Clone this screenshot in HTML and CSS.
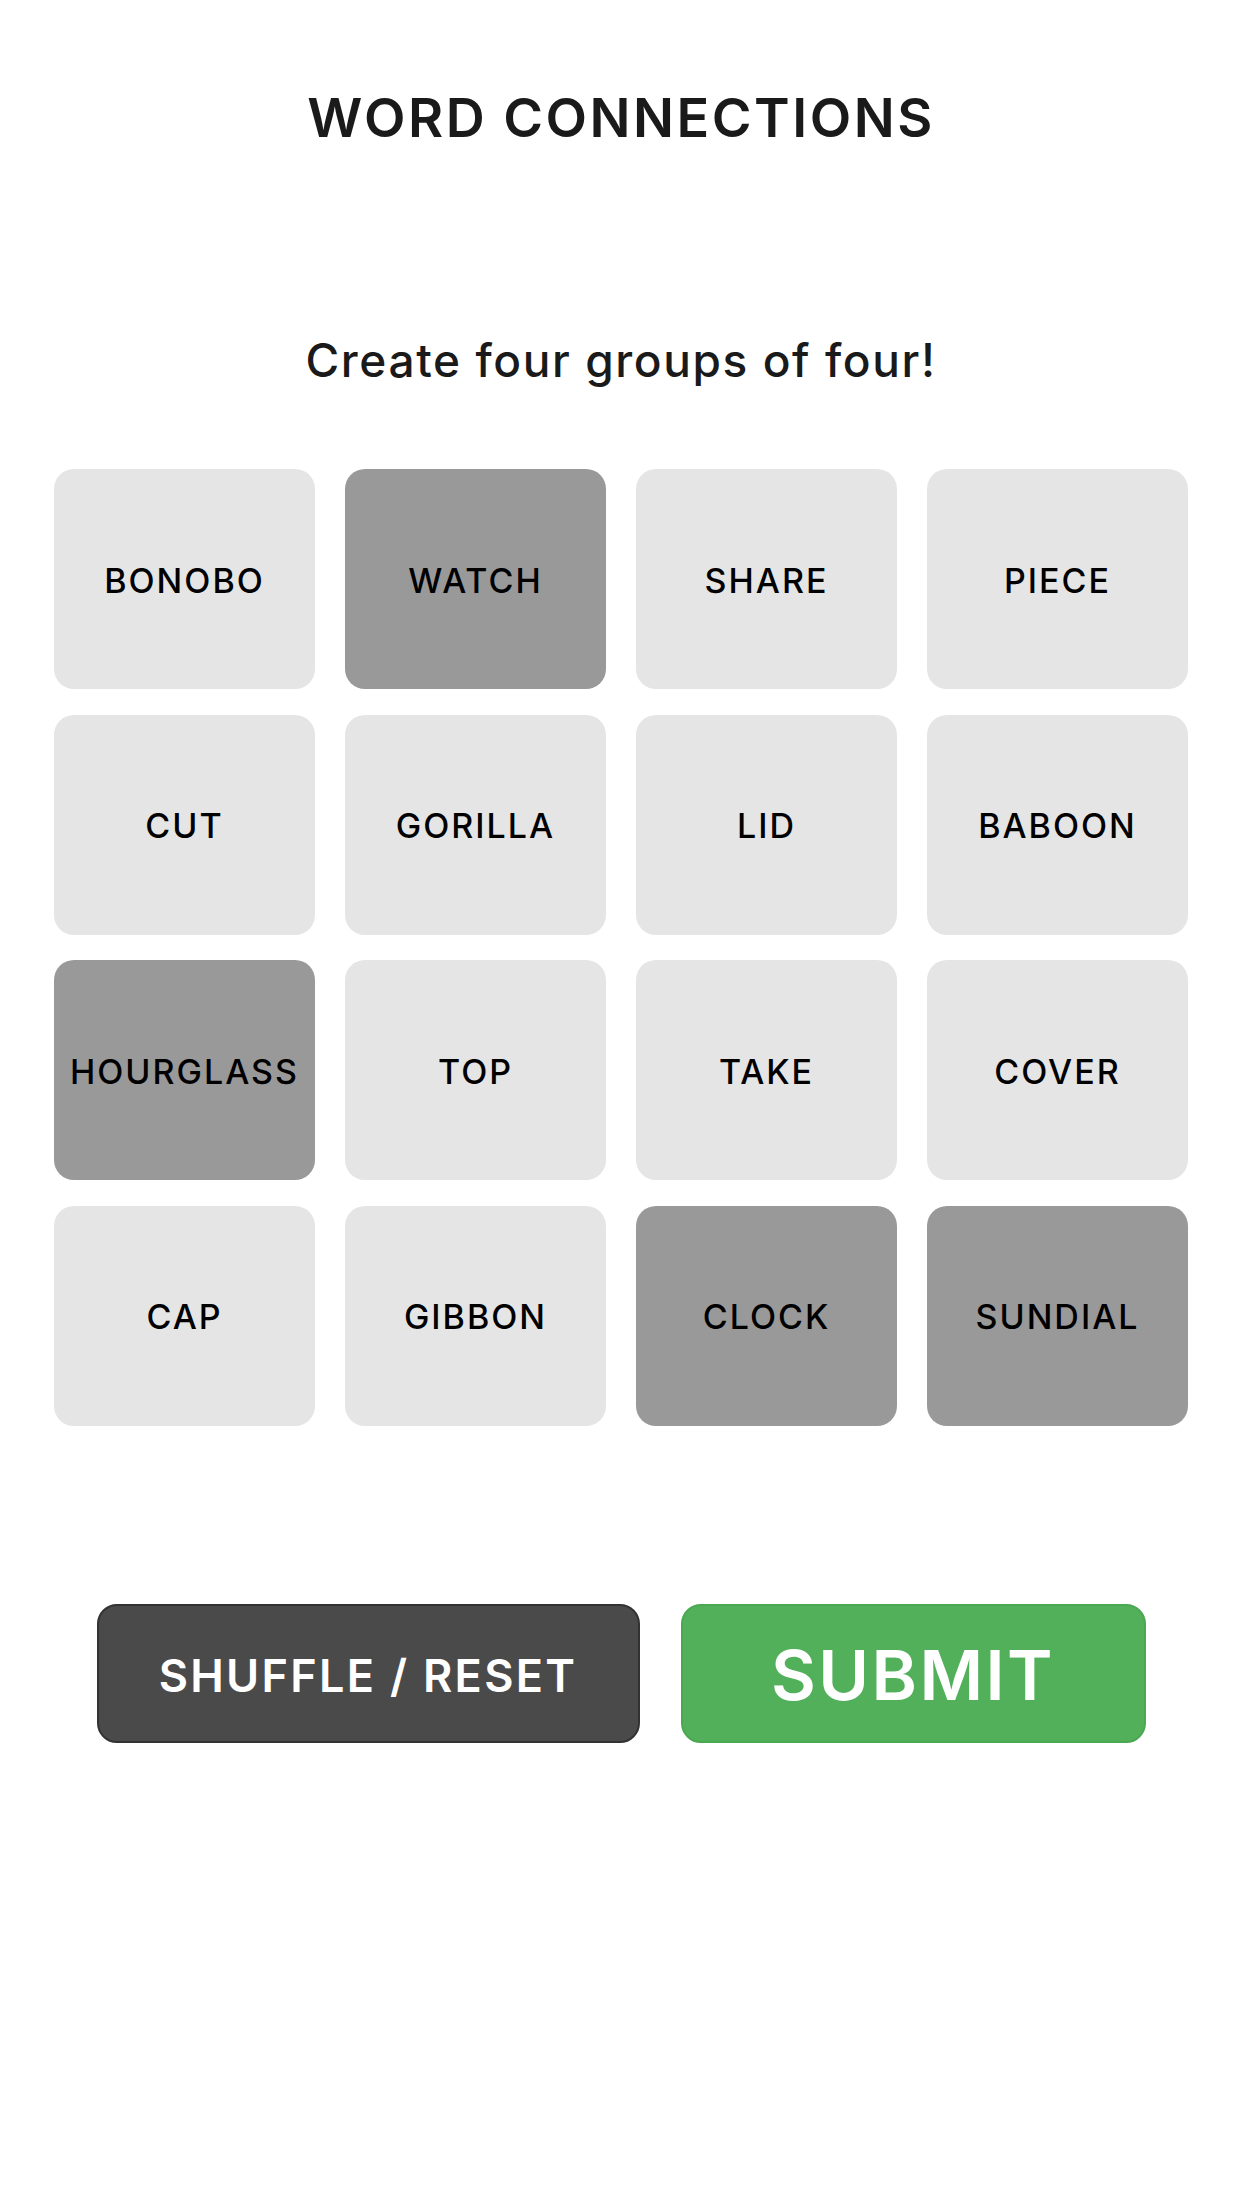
FILE: index.html
```html
<!DOCTYPE html>
<html lang="en">
<head>
<meta charset="utf-8">
<title>Word Connections</title>
<link rel="stylesheet" href="styles.css">
</head>
<body>
<main class="app">
  <h1 class="title">WORD CONNECTIONS</h1>
  <p class="subtitle">Create four groups of four!</p>
  <div class="board">
    <div class="tile">BONOBO</div>
    <div class="tile selected">WATCH</div>
    <div class="tile">SHARE</div>
    <div class="tile">PIECE</div>
    <div class="tile">CUT</div>
    <div class="tile">GORILLA</div>
    <div class="tile">LID</div>
    <div class="tile">BABOON</div>
    <div class="tile selected">HOURGLASS</div>
    <div class="tile">TOP</div>
    <div class="tile">TAKE</div>
    <div class="tile">COVER</div>
    <div class="tile">CAP</div>
    <div class="tile">GIBBON</div>
    <div class="tile selected">CLOCK</div>
    <div class="tile selected">SUNDIAL</div>
  </div>
  <div class="actions">
    <button class="btn btn-shuffle">SHUFFLE / RESET</button>
    <button class="btn btn-submit">SUBMIT</button>
  </div>
</main>
</body>
</html>
```

FILE: styles.css
```css
* { box-sizing: border-box; }
html, body {
  margin: 0;
  padding: 0;
  background: #ffffff;
}
body {
  font-family: Inter, "Noto Sans", "Liberation Sans", sans-serif;
  color: #1a1a1a;
}
.app {
  width: 1242px;
  min-height: 2208px;
  display: flex;
  flex-direction: column;
  align-items: center;
}
.title {
  margin: 91px 0 0;
  font-size: 54px;
  line-height: 54px;
  font-weight: 600;
  letter-spacing: 2.5px;
  color: #1a1a1a;
}
.subtitle {
  margin: 192px 0 0;
  font-size: 46px;
  line-height: 46px;
  font-weight: 500;
  letter-spacing: 1.6px;
  color: #1a1a1a;
}
.board {
  margin-top: 86px;
  display: grid;
  grid-template-columns: repeat(4, 261px);
  grid-auto-rows: 220px;
  column-gap: 30px;
  row-gap: 25.5px;
}
.tile {
  display: flex;
  align-items: center;
  justify-content: center;
  padding-top: 2px;
  background: #e5e5e5;
  border-radius: 20px;
  font-size: 34px;
  font-weight: 500;
  letter-spacing: 2px;
  color: #000;
}
.tile.selected {
  background: #999999;
}
.actions {
  margin-top: 178px;
  display: flex;
  gap: 41px;
}
.btn {
  height: 139px;
  border-radius: 20px;
  font-family: Inter, "Noto Sans", "Liberation Sans", sans-serif;
  color: #ffffff;
  font-weight: 600;
  padding: 4px 0 0;
  cursor: pointer;
}
.btn-shuffle {
  width: 543px;
  background: #4a4a4a;
  border: 2px solid #333333;
  font-size: 45px;
  letter-spacing: 2.3px;
}
.btn-submit {
  width: 465px;
  background: #52b05b;
  border: 2px solid #4aa852;
  font-size: 69px;
  letter-spacing: 2.4px;
}
```
